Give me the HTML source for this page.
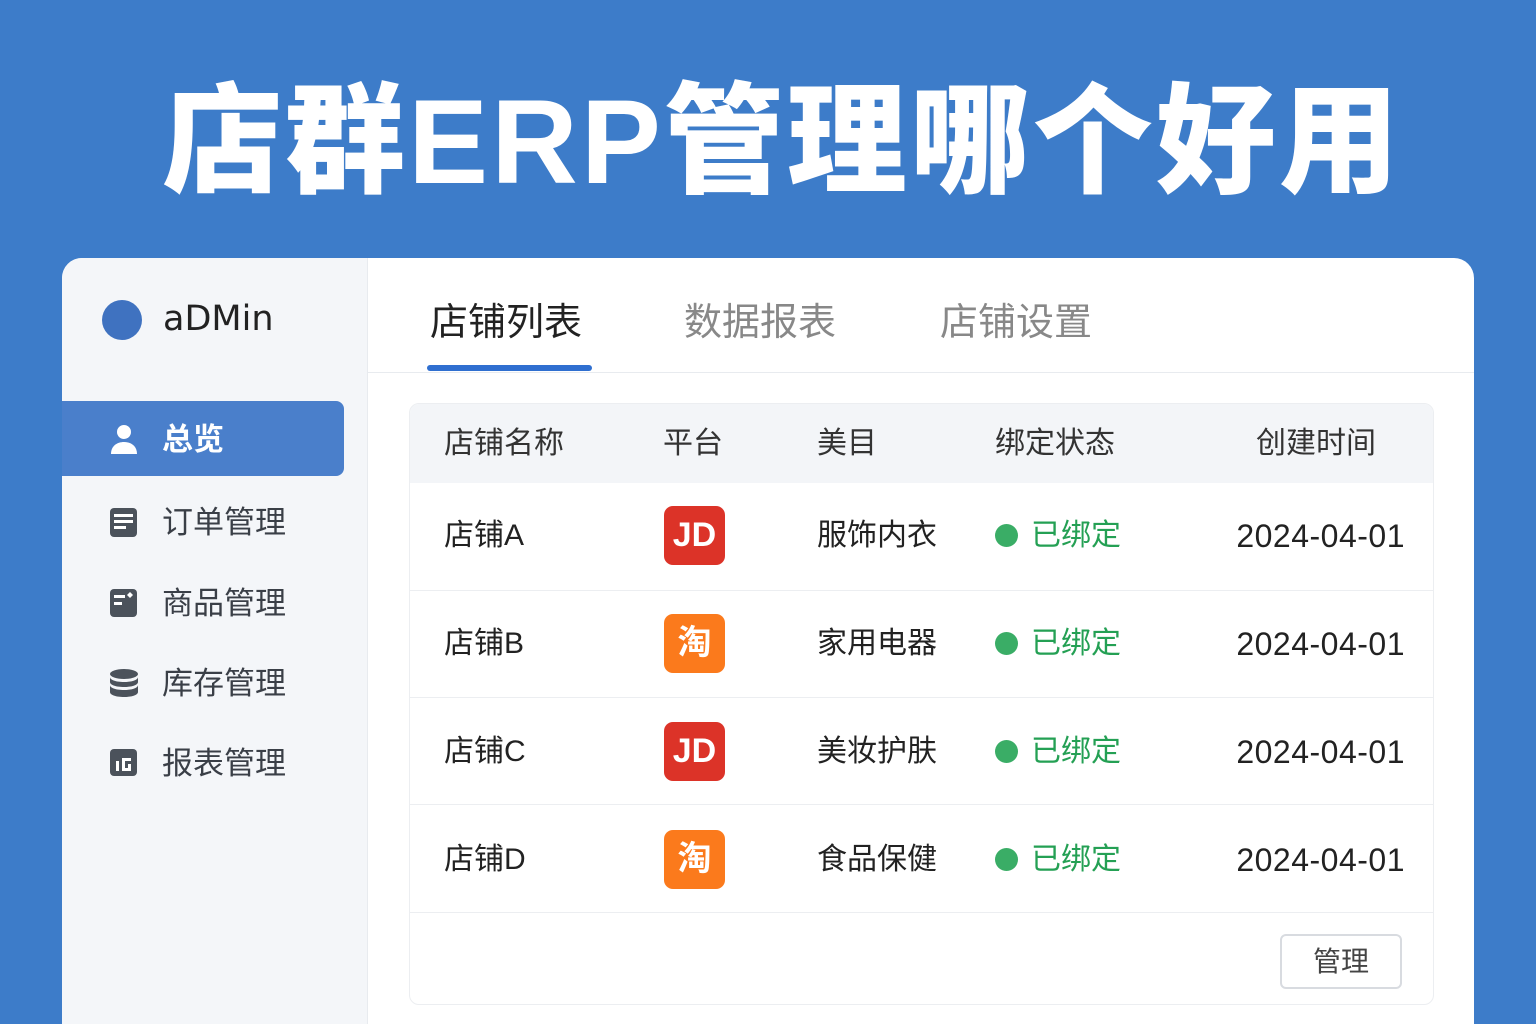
<!DOCTYPE html>
<html><head><meta charset="utf-8"><style>
*{margin:0;padding:0;box-sizing:border-box}
html,body{width:1536px;height:1024px;overflow:hidden}
body{background:#3d7cc9;font-family:"Liberation Sans","Noto Sans CJK SC",sans-serif;position:relative}
.t{position:absolute;left:0;right:0;top:67px;text-align:center;color:#fff;font-size:120px;font-weight:900;letter-spacing:3px;line-height:150px;padding-left:28px;white-space:nowrap}
.card{position:absolute;left:62px;top:258px;width:1412px;height:800px;background:#fff;border-radius:20px;overflow:hidden}
.side{position:absolute;left:0;top:0;width:306px;height:100%;background:#f4f6f9;border-right:1px solid #e8ebef}
.logo{position:absolute;left:40px;top:42px;width:40px;height:40px;border-radius:50%;background:#3f72c0}
.adm{position:absolute;left:101px;top:41px;font-size:35px;color:#222;font-family:"DejaVu Sans",sans-serif}
.hl{position:absolute;left:0;top:114px;width:1412px;height:1px;background:#e8ebef}
.act{position:absolute;left:0;top:143px;width:282px;height:75px;background:#4a7fcb;border-radius:0 8px 8px 0}
.it{position:absolute;left:100px;font-size:31px;color:#3a3f47;line-height:40px}
.ic{position:absolute;left:48px}
.tab{position:absolute;top:40px;font-size:38px;color:#888;line-height:50px}
.tb{position:absolute;left:347px;top:145px;width:1025px;height:602px;border:1px solid #eceef1;border-radius:10px;overflow:hidden;background:#fff}
.th{position:absolute;left:0;top:0;width:100%;height:79px;background:#f3f5f8}
.c{position:absolute;font-size:30px;color:#222;line-height:40px}
.h{color:#333}
.row{position:absolute;left:0;width:100%;height:1px;background:#eceef1}
.lg{position:absolute;left:254px;width:61px;height:59px;border-radius:9px;color:#fff;font-weight:bold;text-align:center;line-height:59px;font-size:34px}
.jd{background:#dc3328}.tb2{background:#fb7a1c}
.dot{position:absolute;left:585px;width:23px;height:23px;border-radius:50%;background:#3aad66}
.st{position:absolute;left:621px;font-size:30px;color:#24a054;line-height:40px}
.dt{position:absolute;right:28px;font-size:32px;color:#222;line-height:40px;letter-spacing:0.5px}
</style></head><body>
<div class="t">店群ERP管理哪个好用</div>
<div class="card">
<div class="side">
<div class="logo"></div><div class="adm">aDMin</div>
<div class="act"></div>
<svg style="position:absolute;left:48px;top:165px" width="28" height="32" viewBox="0 0 28 32"><circle cx="14" cy="9" r="7" fill="#fff"/><path d="M1 31c0-8 6-12 13-12s13 4 13 12z" fill="#fff"/></svg>
<div class="it" style="top:162px;color:#fff;font-weight:bold">总览</div>
<svg class="ic" style="top:250px" width="27" height="29" viewBox="0 0 27 29"><rect width="27" height="29" rx="4" fill="#4b525b"/><rect x="4" y="6" width="19" height="3" fill="#fff"/><rect x="4" y="12" width="19" height="3" fill="#fff"/><rect x="4" y="18" width="12" height="3" fill="#fff"/></svg>
<div class="it" style="top:245px">订单管理</div>
<svg class="ic" style="top:331px" width="27" height="28" viewBox="0 0 27 28"><rect width="27" height="28" rx="4" fill="#4b525b"/><rect x="4" y="6" width="11" height="3" fill="#fff"/><rect x="4" y="13" width="8" height="3" fill="#fff"/><path d="M20 3l3 3-3 3-3-3z" fill="#fff"/></svg>
<div class="it" style="top:326px">商品管理</div>
<svg class="ic" style="top:411px" width="28" height="28" viewBox="0 0 28 28"><ellipse cx="14" cy="5" rx="14" ry="5" fill="#4b525b"/><path d="M0 8c0 3 6 5 14 5s14-2 14-5v5c0 3-6 5-14 5S0 16 0 13z" fill="#4b525b"/><path d="M0 16c0 3 6 5 14 5s14-2 14-5v7c0 3-6 5-14 5S0 26 0 23z" fill="#4b525b"/></svg>
<div class="it" style="top:406px">库存管理</div>
<svg class="ic" style="top:491px" width="27" height="27" viewBox="0 0 27 27"><rect width="27" height="27" rx="4" fill="#4b525b"/><rect x="6" y="12" width="3" height="10" fill="#fff"/><path d="M12 22V9h9v3h-6v7h3v-4h3v7z" fill="#fff"/></svg>
<div class="it" style="top:486px">报表管理</div>
</div>
<div class="hl" style="left:306px"></div>
<div class="tab" style="left:368px;color:#222">店铺列表</div>
<div style="position:absolute;left:365px;top:107px;width:165px;height:6px;border-radius:3px;background:#2f6fd0"></div>
<div class="tab" style="left:622px">数据报表</div>
<div class="tab" style="left:878px">店铺设置</div>
<div class="tb">
<div class="th"></div>
<div class="c h" style="left:34px;top:20px">店铺名称</div>
<div class="c h" style="left:253px;top:20px">平台</div>
<div class="c h" style="left:407px;top:20px">美目</div>
<div class="c h" style="left:585px;top:20px">绑定状态</div>
<div class="c h" style="left:846px;top:20px">创建时间</div>

<div class="c" style="left:34px;top:112px">店铺A</div><div class="lg jd" style="top:102px">JD</div><div class="c" style="left:407px;top:112px">服饰内衣</div><div class="dot" style="top:120px"></div><div class="st" style="top:112px">已绑定</div><div class="dt" style="top:112px">2024-04-01</div>
<div class="row" style="top:186px"></div>
<div class="c" style="left:34px;top:220px">店铺B</div><div class="lg tb2" style="top:210px">淘</div><div class="c" style="left:407px;top:220px">家用电器</div><div class="dot" style="top:228px"></div><div class="st" style="top:220px">已绑定</div><div class="dt" style="top:220px">2024-04-01</div>
<div class="row" style="top:293px"></div>
<div class="c" style="left:34px;top:328px">店铺C</div><div class="lg jd" style="top:318px">JD</div><div class="c" style="left:407px;top:328px">美妆护肤</div><div class="dot" style="top:336px"></div><div class="st" style="top:328px">已绑定</div><div class="dt" style="top:328px">2024-04-01</div>
<div class="row" style="top:400px"></div>
<div class="c" style="left:34px;top:436px">店铺D</div><div class="lg tb2" style="top:426px">淘</div><div class="c" style="left:407px;top:436px">食品保健</div><div class="dot" style="top:444px"></div><div class="st" style="top:436px">已绑定</div><div class="dt" style="top:436px">2024-04-01</div>
<div class="row" style="top:508px"></div>
<div style="position:absolute;left:870px;top:530px;width:122px;height:55px;border:2px solid #d8dbe0;border-radius:6px;text-align:center;line-height:51px;font-size:28px;color:#444">管理</div>
</div>
</div>
</body></html>
